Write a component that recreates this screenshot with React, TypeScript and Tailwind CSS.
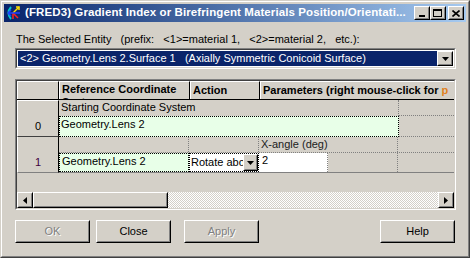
import React from "react";

const F = { fontFamily: '"Liberation Sans", Arial, sans-serif' };

function Raised({ className = "", children }: { className?: string; children?: React.ReactNode }) {
  return (
    <div className={`border border-t-white border-l-white border-r-black border-b-black bg-[#d4d0c8] ${className}`}>
      <div className="w-full h-full border border-t-[#d4d0c8] border-l-[#d4d0c8] border-r-[#808080] border-b-[#808080] flex items-center justify-center">
        {children}
      </div>
    </div>
  );
}

function DownArrow() {
  return (
    <svg width="7" height="4" viewBox="0 0 7 4">
      <path d="M0 0h7L3.5 4z" fill="black" />
    </svg>
  );
}

function TitleIcon() {
  return (
    <svg width="16" height="16" viewBox="0 0 16 16">
      <path d="M6 2 Q1 8 6 14" stroke="#00c8c8" strokeWidth="2" fill="none" />
      <path d="M8 8 L14 2" stroke="#ffe000" strokeWidth="1.5" />
      <path d="M11 2 H14 V5" stroke="#ffe000" strokeWidth="1.5" fill="none" />
      <path d="M8 8 L13 13" stroke="#ff2020" strokeWidth="1.5" />
      <path d="M8 8 L8 14" stroke="#ff2020" strokeWidth="1.5" />
      <path d="M3 8 H15" stroke="#2040ff" strokeWidth="1.5" />
      <path d="M3 8 L6 5 M3 8 L6 11" stroke="#2040ff" strokeWidth="1.5" fill="none" />
    </svg>
  );
}

function Btn({ label, disabled, w = "w-[75px]" }: { label: string; disabled?: boolean; w?: string }) {
  return (
    <Raised className={`${w} h-[23px]`}>
      <span
        className={`text-[11px] leading-none ${disabled ? "text-[#808080] [text-shadow:1px_1px_0_#ffffff]" : "text-black"}`}
      >
        {label}
      </span>
    </Raised>
  );
}

export default function App() {
  return (
    <div style={F} className="w-[470px] h-[258px] bg-[#d4d0c8] overflow-hidden">
      <div className="w-full h-full border border-t-[#d4d0c8] border-l-[#d4d0c8] border-r-[#404040] border-b-[#404040]">
        <div className="w-full h-full border border-t-white border-l-white border-r-[#808080] border-b-[#808080] p-[2px] flex flex-col">
          {/* title bar */}
          <div className="h-[18px] flex items-center bg-gradient-to-r from-[#0a246a] to-[#a6caf0] pl-[1px] pr-[2px]">
            <TitleIcon />
            <span className="ml-[4px] text-white font-bold text-[11.5px] whitespace-nowrap overflow-hidden flex-1 tracking-[0.1px]">
              (FRED3) Gradient Index or Birefringent Materials Position/Orientati...
            </span>
            <div className="flex items-center">
              <Raised className="w-[16px] h-[14px]">
                <div className="w-[6px] h-[2px] bg-black mt-[6px] mr-[1px]" />
              </Raised>
              <Raised className="w-[16px] h-[14px]">
                <div className="w-[9px] h-[8px] border border-black border-t-2 mr-[1px]" />
              </Raised>
              <Raised className="w-[16px] h-[14px] ml-[2px]">
                <svg width="8" height="7" viewBox="0 0 8 7" className="mr-[1px]">
                  <path d="M0.5 0.5 L7.5 6.5 M7.5 0.5 L0.5 6.5" stroke="black" strokeWidth="1.6" />
                </svg>
              </Raised>
            </div>
          </div>

          {/* body */}
          <div className="flex flex-col px-[11px]">
            <div className="mt-[11px] pl-[1px] text-[11px] leading-[13px] text-black whitespace-pre">
              {"The Selected Entity   (prefix:   <1>=material 1,   <2>=material 2,   etc.):"}
            </div>
            {/* select */}
            <div className="mt-[2px] h-[21px] w-[441px] border border-t-[#808080] border-l-[#808080] border-r-white border-b-white">
              <div className="w-full h-full border border-t-[#404040] border-l-[#404040] border-r-[#d4d0c8] border-b-[#d4d0c8] bg-white flex items-center p-[1px]">
                <div className="flex-1 h-full bg-[#0a246a] text-white text-[11px] leading-[15px] pl-[2px] whitespace-pre">
                  {"<2> Geometry.Lens 2.Surface 1   (Axially Symmetric Conicoid Surface)"}
                </div>
                <Raised className="w-[16px] h-full">
                  <DownArrow />
                </Raised>
              </div>
            </div>

            {/* grid */}
            <div className="mt-[10px] h-[131px] w-[441px] border border-t-[#808080] border-l-[#808080] border-r-white border-b-white">
              <div className="w-full h-full border border-t-[#404040] border-l-[#404040] border-r-[#d4d0c8] border-b-[#d4d0c8] flex flex-col">
                {/* header row */}
                <div className="flex h-[19px] border-b border-black">
                  <div className="w-[42px] border-r border-black border-t border-t-white border-l border-l-white" />
                  <div className="w-[131px] border-r border-black border-t border-t-white border-l border-l-white overflow-hidden text-[11px] font-bold leading-[13px] pl-[2px] pt-[1px]">
                    Reference Coordinate System
                  </div>
                  <div className="w-[70px] border-r border-black border-t border-t-white border-l border-l-white overflow-hidden text-[11px] font-bold leading-[13px] pl-[2px] pt-[2px] whitespace-nowrap">
                    Action
                  </div>
                  <div className="flex-1 border-t border-t-white border-l border-l-white overflow-hidden text-[11px] font-bold leading-[13px] pl-[2px] pt-[2px] whitespace-nowrap">
                    Parameters (right mouse-click for <span className="text-[#e08020]">p</span>
                  </div>
                </div>

                {/* row 0 */}
                <div className="flex h-[37px]">
                  <div className="w-[42px] border-r border-black border-b border-b-[#404040] border-t border-t-white border-l border-l-white flex items-end justify-center pb-[3px] text-[11px] leading-[13px]">
                    0
                  </div>
                  <div className="flex-1 flex flex-col">
                    <div className="flex h-[16px]">
                      <div className="w-[339px] text-[11px] leading-[13px] pl-[2px] pt-[1px] whitespace-nowrap">
                        Starting Coordinate System
                      </div>
                      <div className="flex-1 border-l border-dotted border-l-[#808080] border-b border-b-[#808080]" />
                    </div>
                    <div className="flex h-[21px]">
                      <div className="w-[340px] bg-[#e8ffe8] border border-dotted border-black text-[11px] leading-[13px] pl-[1px] pt-[1px]">
                        Geometry.Lens 2
                      </div>
                      <div className="flex-1 border-b border-dotted border-b-[#808080]" />
                    </div>
                  </div>
                </div>

                {/* row 1 */}
                <div className="flex h-[36px]">
                  <div className="w-[42px] border-r border-black border-b border-b-[#808080] border-l border-l-white flex items-end justify-center pb-[3px] text-[11px] leading-[13px] text-[#400040]">
                    1
                  </div>
                  <div className="flex-1 flex flex-col border-b border-b-[#808080]">
                    <div className="flex h-[16px] border-b border-dotted border-b-[#808080]">
                      <div className="w-[130px] border-r border-dotted border-r-[#808080]" />
                      <div className="w-[70px] border-r border-dotted border-r-[#808080]" />
                      <div className="w-[139px] border-r border-dotted border-r-[#808080] text-[11px] leading-[13px] pl-[2px] pt-[1px] text-[#202020] whitespace-nowrap">
                        X-angle (deg)
                      </div>
                      <div className="flex-1" />
                    </div>
                    <div className="flex flex-1">
                      <div className="w-[130px] bg-[#e8ffe8] border border-dotted border-black text-[11px] leading-[13px] pl-[2px] pt-[1px]">
                        Geometry.Lens 2
                      </div>
                      <div className="w-[70px] bg-white border border-dotted border-black flex items-start">
                        <div className="flex-1 overflow-hidden whitespace-nowrap text-[11px] leading-[13px] pl-[1px] pt-[2px]">
                          Rotate about
                        </div>
                        <Raised className="w-[15px] h-[17px]">
                          <DownArrow />
                        </Raised>
                      </div>
                      <div className="w-[69px] bg-white border-r border-dotted border-r-[#808080] text-[11px] leading-[13px] pl-[3px] pt-[1px]">
                        2
                      </div>
                      <div className="w-[70px] border-r border-dotted border-r-[#808080]" />
                      <div className="flex-1" />
                    </div>
                  </div>
                </div>

                <div className="flex-1" />

                {/* scrollbar */}
                <div className="flex h-[16px]">
                  <Raised className="w-[16px] h-[16px]">
                    <svg width="4" height="7" viewBox="0 0 4 7">
                      <path d="M4 0v7L0 3.5z" fill="black" />
                    </svg>
                  </Raised>
                  <Raised className="w-[135px] h-[16px]" />
                  <div className="flex-1 bg-[repeating-conic-gradient(#ffffff_0_25%,#d4d0c8_0_50%)] bg-[length:2px_2px]" />
                  <Raised className="w-[16px] h-[16px]">
                    <svg width="4" height="7" viewBox="0 0 4 7">
                      <path d="M0 0v7L4 3.5z" fill="black" />
                    </svg>
                  </Raised>
                </div>
              </div>
            </div>

            {/* buttons */}
            <div className="mt-[10px] flex">
              <Btn label="OK" disabled />
              <div className="ml-[6px]">
                <Btn label="Close" />
              </div>
              <div className="ml-[13px]">
                <Btn label="Apply" disabled />
              </div>
              <div className="ml-auto">
                <Btn label="Help" />
              </div>
            </div>
          </div>
        </div>
      </div>
    </div>
  );
}
